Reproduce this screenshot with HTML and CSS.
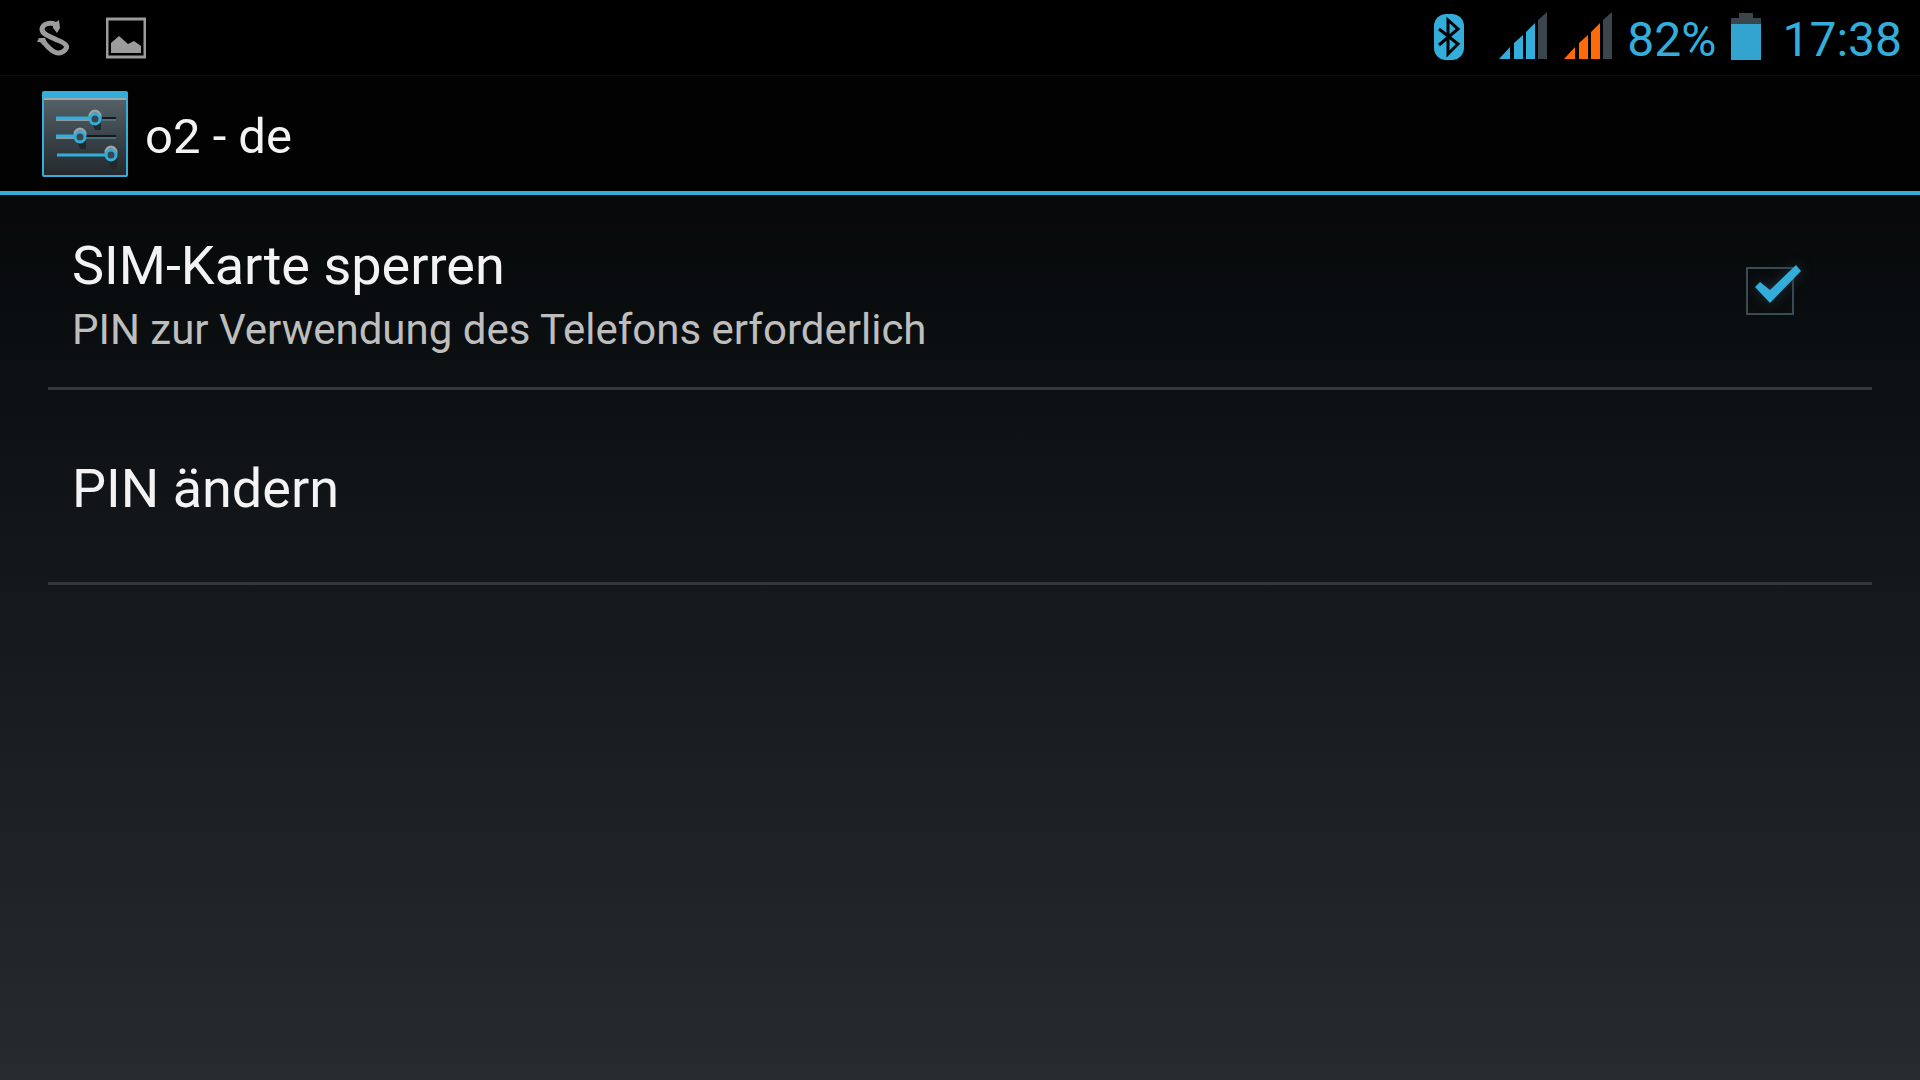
FILE: index.html
```html
<!DOCTYPE html>
<html lang="de">
<head>
    <meta charset="UTF-8">
    <title>o2 - de</title>
    <link rel="stylesheet" href="styles.css">
</head>
<body>
<div class="statusbar">
    <div class="notifications">
        <svg class="icon-s" viewBox="0 0 33 48">
            <path d="M20 13 C14 10 6 11 5 17 C5 23 13 24 20 28 C28 31 32 34 28 38 C22 44 15 41 6 29" fill="none" stroke="#9c9c9c" stroke-width="5"/>
            <path d="M16 12 L22 8 L23 16 L20 21 L16 16 Z M0 30 L2 26 L8 26 L10 31 L6 33 L3 30 Z" fill="#9c9c9c"/>
        </svg>
        <svg class="icon-picture" viewBox="0 0 40 48">
            <rect x="1" y="7" width="38" height="38" fill="none" stroke="#9c9c9c" stroke-width="3"/>
            <path d="M5 41 V31 L13 24 L22 32 L28 29 L35 34 V41 Z" fill="#9c9c9c"/>
        </svg>
    </div>
    <div class="system">
        <svg class="icon-bluetooth" viewBox="0 0 30 48">
            <rect x="0" y="2" width="30" height="46" rx="12" fill="#33add9"/>
            <path d="M5 17 L24 32 L14 42 V8 L24 17 L5 33" fill="none" stroke="#000" stroke-width="3"/>
        </svg>
        <svg class="icon-signal blue" viewBox="0 0 49 48">
            <path d="M1 47 L12 35 V47 Z M16 31 L25 23 V47 H16 Z M28 20 L37 11 V47 H28 Z"/>
            <path class="off" d="M40 8 L49 0 V47 H40 Z"/>
        </svg>
        <svg class="icon-signal orange" viewBox="0 0 49 48">
            <path d="M1 47 L12 35 V47 Z M16 31 L25 23 V47 H16 Z M28 20 L37 11 V47 H28 Z"/>
            <path class="off" d="M40 8 L49 0 V47 H40 Z"/>
        </svg>
        <span class="percent">82%</span>
        <svg class="icon-battery" viewBox="0 0 30 48">
            <path d="M0 12 V6 H8 V1 H22 V6 H30 V12 Z" fill="#3b464c"/>
            <rect x="0" y="12" width="30" height="36" fill="#33a4d0"/>
        </svg>
        <span class="clock">17:38</span>
    </div>
</div>

<header class="actionbar">
    <svg class="icon-settings" viewBox="0 0 86 86">
        <defs>
            <linearGradient id="panel" x1="0" y1="0" x2="0" y2="1">
                <stop offset="0" stop-color="#566268"/>
                <stop offset="0.5" stop-color="#39454a"/>
                <stop offset="1" stop-color="#25292d"/>
            </linearGradient>
        </defs>
        <rect width="86" height="86" rx="2" fill="#33add9"/>
        <rect x="2" y="7" width="82" height="77" fill="url(#panel)"/>
        <path d="M2 8 H84" stroke="#a0a8ab" stroke-width="2"/>
        <path d="M50 32 h9 v7 h-6 Z M35 50 h9 v8 h-6 Z M66 68 h9 v10 h-6 Z" fill="#22292d"/>
        <path d="M60 27 H74 M44 45 H74" stroke="#15191c" stroke-width="2"/>
        <path d="M60 29 H74 M44 47 H74" stroke="#5c93a8" stroke-width="1"/>
        <path d="M14 29 H48 M14 47 H32" stroke="#8d999e" stroke-width="2"/>
        <path d="M14 27 H48 M14 45 H32 M15 64 H63" stroke="#33add9" stroke-width="3"/>
        <g fill="#39464c" stroke="#9ba3a6" stroke-width="3">
            <circle cx="53" cy="25" r="5"/>
            <circle cx="38" cy="43" r="5"/>
            <circle cx="69" cy="61" r="5"/>
        </g>
        <g fill="#39464c" stroke="#33add9" stroke-width="3">
            <circle cx="53" cy="28" r="5"/>
            <circle cx="38" cy="46" r="5"/>
            <circle cx="69" cy="64" r="5"/>
        </g>
    </svg>
    <h1 class="title">o2 - de</h1>
</header>

<main class="list">
    <div class="row">
        <label class="text" for="simlock">
            <span class="name">SIM-Karte sperren</span>
            <span class="summary">PIN zur Verwendung des Telefons erforderlich</span>
        </label>
        <div class="check">
            <input type="checkbox" id="simlock" checked>
            <svg class="tick" viewBox="0 0 48 48">
                <path d="M9 20 L14 15 L24 23 L50 -2 L55 4 L24 36 Z" fill="#33add9"/>
            </svg>
        </div>
    </div>
    <button class="row" type="button">
        <span class="text"><span class="name">PIN ändern</span></span>
    </button>
</main>
</body>
</html>
```
FILE: styles.css
```css
* {
    box-sizing: border-box;
    margin: 0;
    padding: 0;
}
body {
    min-height: 100vh;
    background: linear-gradient(#000000, #0d1113 37%, #272b30);
    color: #f3f3f3;
    font-family: Roboto, "Noto Sans", sans-serif;
}
svg {
    display: block;
    flex: none;
}

/* status bar */
.statusbar {
    display: flex;
    justify-content: space-between;
    height: 76px;
    padding: 12px 18px 16px 37px;
    background: #000000;
    border-bottom: 1px solid #101010;
}
.notifications {
    display: flex;
    gap: 36px;
}
.system {
    display: flex;
    color: #33add9;
    font-size: 48px;
    line-height: 56px;
}
.statusbar svg {
    height: 48px;
}
.icon-s {
    width: 33px;
}
.icon-picture {
    width: 40px;
}
.icon-bluetooth {
    width: 30px;
    margin-right: 34px;
}
.icon-signal {
    width: 49px;
    margin-right: 16px;
}
.orange {
    margin-right: 15px;
}
.blue {
    fill: #33add9;
}
.orange {
    fill: #ff6a0a;
}
.off {
    fill: #3b464c;
}
.percent {
    margin-right: 15px;
}
.icon-battery {
    width: 30px;
    margin-right: 21px;
}

/* action bar */
.actionbar {
    display: flex;
    align-items: center;
    gap: 17px;
    height: 119px;
    padding-left: 42px;
    background: #020202;
    border-bottom: 4px solid #33add9;
}
.icon-settings {
    width: 86px;
    height: 86px;
}
.title {
    padding-top: 6px;
    font-size: 49px;
    font-weight: 400;
    line-height: 56px;
}

/* settings list */
.list {
    padding: 0 48px;
}
.row {
    display: flex;
    align-items: center;
    justify-content: space-between;
    width: 100%;
    min-height: 195px;
    padding: 0 78px 0 24px;
    border: none;
    border-bottom: 3px solid #33383b;
    background: none;
    color: inherit;
    font-family: inherit;
    text-align: left;
}
.text {
    display: flex;
    flex-direction: column;
    gap: 8px;
    padding-top: 6px;
}
.name {
    font-size: 54px;
    line-height: 64px;
}
.summary {
    color: #bebebe;
    font-size: 42px;
    line-height: 48px;
}
.check {
    display: grid;
    width: 48px;
    height: 48px;
}
.check input,
.tick {
    grid-area: 1 / 1;
    width: 48px;
    height: 48px;
}
.check input {
    appearance: none;
    border: 2px solid #3b4b53;
}
.tick {
    overflow: visible;
    pointer-events: none;
    visibility: hidden;
    filter: drop-shadow(0 0 6px #22343c);
}
.check input:checked + .tick {
    visibility: visible;
}
```
